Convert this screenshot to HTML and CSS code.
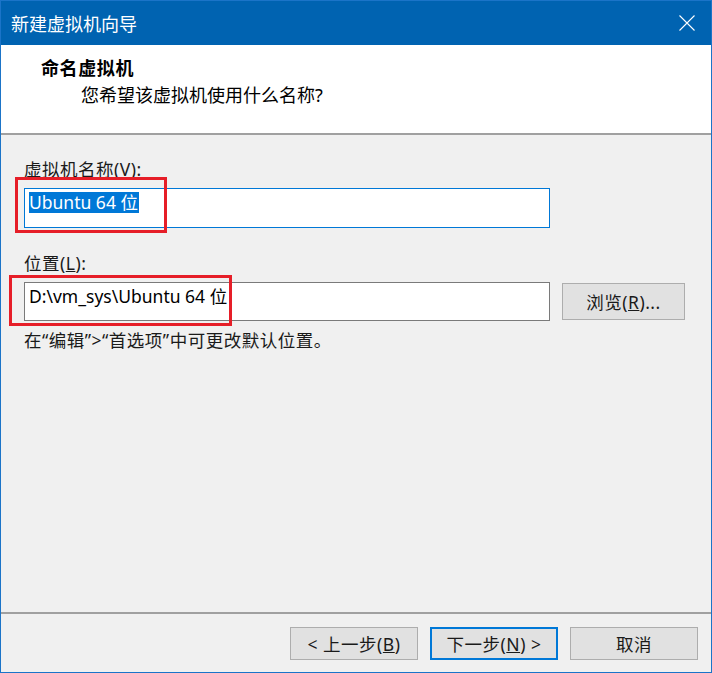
FILE: index.html
```html
<!DOCTYPE html>
<html lang="zh-CN">
<head>
<meta charset="utf-8">
<title>新建虚拟机向导</title>
<link rel="stylesheet" href="styles.css">
</head>
<body>
<div class="window">
  <div class="titlebar">
    <span class="title">新建虚拟机向导</span>
    <svg class="close" width="16" height="16" viewBox="0 0 16 16" aria-hidden="true"><path d="M0.5 0.5 L15.5 15.5 M15.5 0.5 L0.5 15.5" stroke="#ffffff" stroke-width="1.1" fill="none"/></svg>
  </div>
  <div class="header">
    <div class="header-title">命名虚拟机</div>
    <div class="header-sub">您希望该虚拟机使用什么名称?</div>
  </div>
  <div class="main">
    <div class="label">虚拟机名称(V):</div>
    <div class="textbox focused"><span class="sel">Ubuntu 64 位</span></div>
    <div class="label second">位置(<u>L</u>):</div>
    <div class="row">
      <div class="textbox">D:\vm_sys\Ubuntu 64 位</div>
      <div class="btn browse">浏览(<u>R</u>)...</div>
    </div>
    <div class="note">在“编辑”&gt;“首选项”中可更改默认位置。</div>
  </div>
  <div class="footer">
    <div class="btn">&lt; 上一步(<u>B</u>)</div>
    <div class="btn default">下一步(<u>N</u>) &gt;</div>
    <div class="btn">取消</div>
  </div>
  <div class="mark mark-name"></div>
  <div class="mark mark-path"></div>
</div>
</body>
</html>
```

FILE: styles.css
```css
* { box-sizing: border-box; }
html, body { margin: 0; padding: 0; background: #ffffff; }
body { font-family: "Noto Sans", "Noto Sans CJK SC", sans-serif; color: #1a1a1a; }

.window {
  position: relative;
  width: 712px;
  height: 673px;
  border: 1px solid #1b74c8;
  background: #f0f0f0;
  display: flex;
  flex-direction: column;
  overflow: hidden;
}

.titlebar {
  flex: none;
  height: 44px;
  background: #0063b1;
  display: flex;
  align-items: center;
  padding: 0 16px 0 10px;
  color: #ffffff;
}
.title { font-family: "Noto Sans CJK SC", sans-serif; font-size: 18px; line-height: 24px; }
.close { display: block; margin-left: auto; }

.header {
  flex: none;
  height: 90px;
  background: #ffffff;
  border-bottom: 2px solid #a0a0a0;
  padding: 10px 0 0 40px;
  color: #000000;
}
.header-title {
  font-family: "Noto Sans CJK SC", sans-serif;
  font-weight: 700;
  font-size: 18px;
  line-height: 24px;
  letter-spacing: 0.6px;
}
.header-sub {
  font-family: "Noto Sans", "Noto Sans CJK SC", sans-serif;
  font-size: 18px;
  line-height: 24px;
  margin: 4px 0 0 40px;
}

.main { flex: 1; padding: 23px 0 0 23px; }
.label { font-size: 17.5px; line-height: 22px; letter-spacing: 0.5px; }
.label.second { margin-top: 24px; }

.textbox {
  width: 526px;
  height: 40px;
  margin-top: 8px;
  background: #ffffff;
  border: 1px solid #7a7a7a;
  padding: 3px 4px 0;
  font-family: "Noto Sans", "Noto Sans CJK SC", sans-serif;
  font-size: 17.5px;
  line-height: 21px;
  color: #000000;
  white-space: nowrap;
}
.textbox.focused { border-color: #0078d7; }
.sel {
  display: inline-block;
  height: 21px;
  padding-right: 1px;
  vertical-align: top;
  background: #0078d7;
  color: #ffffff;
}

.row { display: flex; align-items: center; gap: 12px; margin-top: 8px; }
.row .textbox { margin-top: 0; height: 39px; flex: none; }

.note { font-size: 17.5px; line-height: 22px; margin-top: 8px; letter-spacing: 0.5px; }

.btn {
  flex: none;
  width: 128px;
  height: 33px;
  background: #e1e1e1;
  border: 1px solid #adadad;
  display: flex;
  align-items: center;
  justify-content: center;
  font-size: 17.5px;
  line-height: 22px;
  letter-spacing: 0.5px;
  color: #1a1a1a;
  white-space: pre;
}
.btn.default { border: 2px solid #0078d7; }
.btn.browse { width: 123px; height: 37px; }

.footer {
  flex: none;
  height: 60px;
  border-top: 2px solid #a0a0a0;
  padding: 13px 13px 0 0;
  display: flex;
  justify-content: flex-end;
  align-items: flex-start;
  gap: 12px;
}

.mark {
  position: absolute;
  border: 3px solid #e61e28;
  pointer-events: none;
}
.mark-name { left: 14px; top: 176px; width: 152px; height: 56px; }
.mark-path { left: 8px; top: 274px; width: 223px; height: 51px; }
```
